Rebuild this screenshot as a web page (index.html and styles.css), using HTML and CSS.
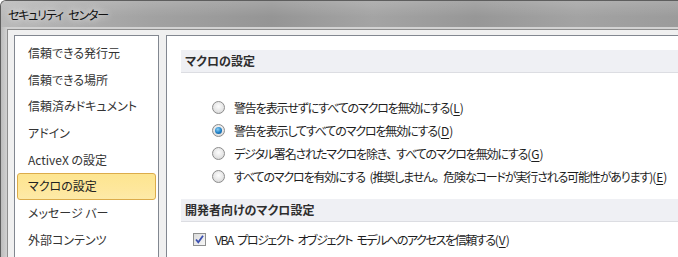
FILE: index.html
```html
<!DOCTYPE html>
<html>
<head>
  <title>セキュリティ センター</title>
  <link rel="stylesheet" href="styles.css">
</head>
<body>
  <div class="window">
    <div class="titlebar"><span class="title">セキュリティ センター</span></div>
    <div class="frame">
      <div class="client">
        <ul class="nav">
          <li>信頼できる発行元</li>
          <li>信頼できる場所</li>
          <li>信頼済みドキュメント</li>
          <li>アドイン</li>
          <li>ActiveX の設定</li>
          <li class="selected">マクロの設定</li>
          <li>メッセージ バー</li>
          <li>外部コンテンツ</li>
        </ul>

        <div class="content">
          <div class="section-head">マクロの設定</div>
          <ul class="options">
            <li><span class="radio"></span>警告を表示せずにすべてのマクロを無効にする<span class="key">(<u>L</u>)</span></li>
            <li><span class="radio checked"></span>警告を表示してすべてのマクロを無効にする<span class="key">(<u>D</u>)</span></li>
            <li><span class="radio"></span>デジタル署名されたマクロを除き<span class="wide">、</span>すべてのマクロを無効にする<span class="key">(<u>G</u>)</span></li>
            <li><span class="radio"></span>すべてのマクロを有効にする (推奨しません<span class="wide">。</span>危険なコードが実行される可能性があります)<span class="key">(<u>E</u>)</span></li>
          </ul>

          <div class="section-head second">開発者向けのマクロ設定</div>
          <div class="check-row">
            <span class="checkbox">
              <svg width="11" height="11" viewBox="0 0 11 11">
                <path d="M2 5.5 L4.3 8.3 L9 1.8" fill="none" stroke="#3a4fb0" stroke-width="1.8"/>
              </svg>
            </span>
            VBA プロジェクト オブジェクト モデルへのアクセスを信頼する<span class="key">(<u>V</u>)</span>
          </div>
        </div>
      </div>
    </div>
  </div>
</body>
</html>
```

FILE: styles.css
```css
/* Trust Center dialog, Windows 7 look */

body {
  margin: 0;
  width: 678px;
  height: 257px;
  overflow: hidden;
  font-family: "Noto Sans CJK JP", "Noto Sans", sans-serif;
  font-size: 12px;
  font-feature-settings: "palt";
}

.window {
  height: 257px;
  border-top: 1px solid #5e5e5e;
  border-left: 1px solid #5e5e5e;
  border-top-left-radius: 6px;
  background: #c4c4c4;
  overflow: hidden;
}

.titlebar {
  height: 26px;
  display: flex;
  align-items: center;
  padding-left: 7px;
  background:
    linear-gradient(to bottom, rgba(255,255,255,0.15), rgba(255,255,255,0) 60%),
    linear-gradient(to right, #b9b9b9 0%, #a2a2a2 22%, #959595 40%, #a4a4a4 55%, #979797 70%, #a3a3a3 85%, #9b9b9b 100%);
}

.title {
  color: #111;
  font-size: 12px;
  letter-spacing: -1.2px;
  word-spacing: 4px;
  text-shadow: 0 0 6px #e8e8e8, 0 0 10px #e0e0e0;
}

.frame {
  padding: 2px 0 0 6px;
  background: linear-gradient(to right, #bcbcbc, #d2d2d2 6px);
}

.client {
  display: flex;
  gap: 7px;
  height: 240px;
  padding: 5px 0 0 6px;
  background: #f0f0f0;
  border-top: 1px solid #8e8e8e;
  border-left: 1px solid #8e8e8e;
}

/* left navigation list */

.nav {
  list-style: none;
  margin: 0;
  padding: 4px 1px 0 1px;
  width: 141px;
  flex: none;
  background: #fff;
  border: 1px solid #828790;
  border-bottom: none;
}

.nav li {
  box-sizing: border-box;
  height: 26.7px;
  line-height: 24.7px;
  margin: 0 1px;
  padding-left: 10px;
  color: #333;
  border: 1px solid transparent;
  border-radius: 3px;
}

.nav li.selected {
  color: #222;
  background: linear-gradient(to bottom, #fde590, #fee79c 60%, #fdeaa8);
  border-color: #dcac4a;
}

/* right content */

.content {
  flex: 1;
  min-width: 0;
  background: #fff;
  border: 1px solid #828790;
  border-right: none;
  border-bottom: none;
  padding: 14px 0 0 14px;
  color: #1e1e1e;
}

.section-head {
  box-sizing: border-box;
  height: 23px;
  line-height: 22px;
  padding-left: 4px;
  font-weight: bold;
  color: #2e2e2e;
  background: #eff0f4;
  border-bottom: 1px solid #dcdde2;
}

.section-head.second {
  margin-top: 11px;
}

.options {
  list-style: none;
  margin: 0;
  padding: 23px 0 0 31px;
}

.options li {
  height: 23px;
  display: flex;
  align-items: center;
  white-space: pre;
  letter-spacing: -1.15px;
  word-spacing: 3px;
}

.wide {
  font-feature-settings: normal;
  letter-spacing: -2px;
}

.key {
  letter-spacing: 0;
}

.radio {
  box-sizing: border-box;
  width: 13px;
  height: 13px;
  margin-right: 9px;
  flex: none;
  border-radius: 50%;
  border: 1px solid #8c8c8c;
  background: radial-gradient(circle at 50% 40%, #fdfdfd, #e6e6e6 55%, #cfcfcf);
  display: flex;
  align-items: center;
  justify-content: center;
}

.radio.checked::after {
  content: "";
  width: 7px;
  height: 7px;
  border-radius: 50%;
  background: radial-gradient(circle at 40% 35%, #8ad0f7, #1f7fc4 55%, #0b4f8c);
}

.check-row {
  height: 23px;
  margin-top: 6px;
  padding-left: 12px;
  display: flex;
  align-items: center;
  white-space: nowrap;
  letter-spacing: -1.4px;
  word-spacing: 3px;
}

.checkbox {
  box-sizing: border-box;
  width: 13px;
  height: 13px;
  margin-right: 9px;
  flex: none;
  border: 1px solid #8e8f8f;
  background: linear-gradient(135deg, #dcdcdc, #f6f6f6);
  display: flex;
  align-items: center;
  justify-content: center;
}

u {
  text-decoration: underline;
  text-underline-offset: 2px;
}
```
